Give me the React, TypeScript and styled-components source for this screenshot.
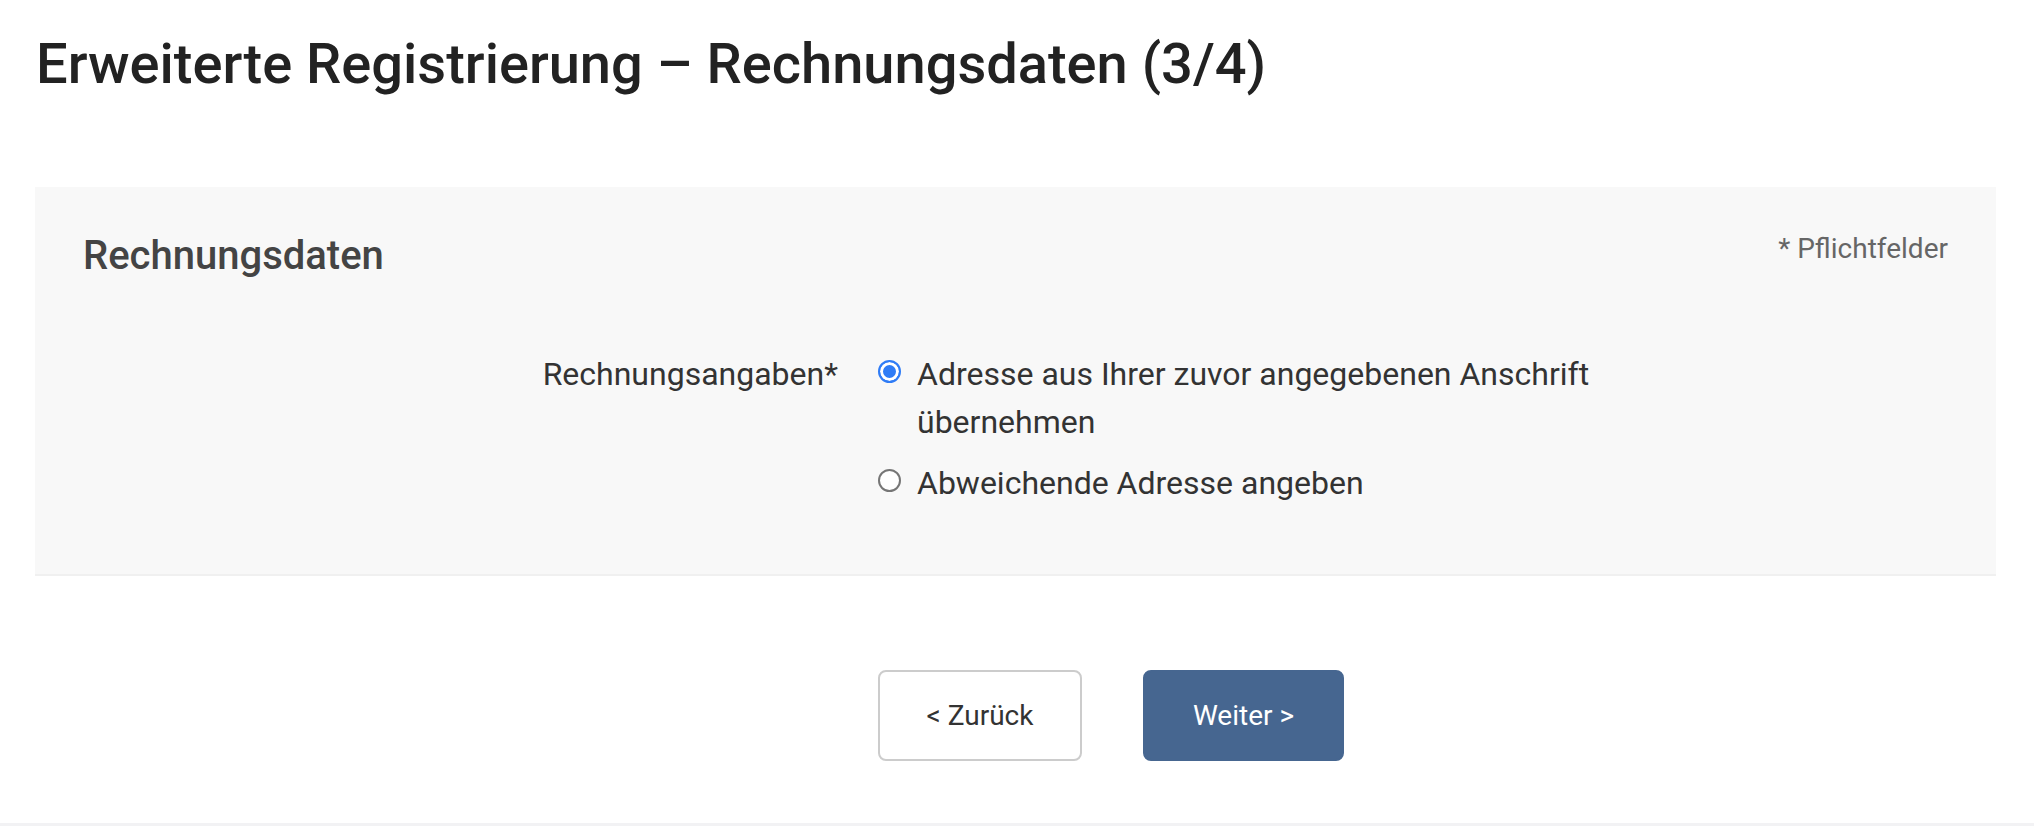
import React from "react";
import styled, { createGlobalStyle } from "styled-components";

const GlobalStyle = createGlobalStyle`
  body {
    margin: 0;
    background: #ffffff;
    font-family: Roboto, "Noto Sans", "Liberation Sans", sans-serif;
    color: #333333;
  }
`;

const options = [
  { id: "same", text: "Adresse aus Ihrer zuvor angegebenen Anschrift übernehmen", checked: true },
  { id: "other", text: "Abweichende Adresse angeben", checked: false },
];

export default function App() {
  return (
    <>
      <GlobalStyle />
      <Main>
        <Title>Erweiterte Registrierung – Rechnungsdaten (3/4)</Title>
        <Panel>
          <PanelHeader>
            <PanelTitle>Rechnungsdaten</PanelTitle>
            <Required>* Pflichtfelder</Required>
          </PanelHeader>
          <FormGrid>
            <FieldLabel>Rechnungsangaben*</FieldLabel>
            <RadioList>
              {options.map((o) => (
                <RadioOption key={o.id}>
                  <Radio type="radio" name="billing" defaultChecked={o.checked} />
                  <span>{o.text}</span>
                </RadioOption>
              ))}
            </RadioList>
          </FormGrid>
        </Panel>
        <Actions>
          <span />
          <ButtonRow>
            <Button>&lt; Zurück</Button>
            <Button $primary>Weiter &gt;</Button>
          </ButtonRow>
        </Actions>
      </Main>
      <Footer />
    </>
  );
}

// Styled Components

const Main = styled.main`
  padding: 0 38px 0 35px;
`;

const Title = styled.h1`
  margin: 31px 0 0 1px;
  font-size: 56px;
  font-weight: 500;
  line-height: 1.2;
  color: #222222;
`;

const Panel = styled.section`
  margin-top: 89px;
  background: #f8f8f8;
  padding: 45px 48px 67px;
  box-shadow: 0 2px 0 #f0f0f0;
`;

const PanelHeader = styled.div`
  display: flex;
  justify-content: space-between;
  align-items: flex-start;
`;

const PanelTitle = styled.h2`
  margin: 0;
  font-size: 40px;
  font-weight: 500;
  line-height: 48px;
  color: #444444;
`;

const Required = styled.span`
  font-size: 28px;
  line-height: 34px;
  color: #666666;
`;

const FormGrid = styled.div`
  display: grid;
  grid-template-columns: 755px 740px;
  column-gap: 40px;
  margin-top: 70px;
`;

const FieldLabel = styled.div`
  text-align: right;
  font-size: 32px;
  line-height: 48px;
  color: #333333;
`;

const RadioList = styled.div`
  display: flex;
  flex-direction: column;
  gap: 13px;
`;

const RadioOption = styled.label`
  display: flex;
  align-items: flex-start;
  gap: 16px;
  font-size: 32px;
  line-height: 48px;
  color: #333333;
`;

const Radio = styled.input`
  appearance: none;
  flex: none;
  box-sizing: border-box;
  width: 23px;
  height: 23px;
  margin: 10px 0 0;
  border: 2px solid #767676;
  border-radius: 50%;
  background: #ffffff;

  &:checked {
    border-color: #2f7cf6;
    background: #2f7cf6;
    box-shadow: inset 0 0 0 3px #ffffff;
  }
`;

const Actions = styled.div`
  display: grid;
  grid-template-columns: 755px 740px;
  column-gap: 40px;
  padding-left: 48px;
  margin-top: 96px;
`;

const ButtonRow = styled.div`
  display: flex;
  gap: 61px;
`;

const Button = styled.button<{ $primary?: boolean }>`
  width: ${(p) => (p.$primary ? "201px" : "204px")};
  height: 91px;
  border: 2px solid ${(p) => (p.$primary ? "#466690" : "#cccccc")};
  border-radius: 8px;
  background: ${(p) => (p.$primary ? "#466690" : "#ffffff")};
  color: ${(p) => (p.$primary ? "#ffffff" : "#333333")};
  font-family: Roboto, "Liberation Sans", sans-serif;
  font-size: 28px;
  cursor: pointer;
`;

const Footer = styled.footer`
  margin-top: 62px;
  height: 3px;
  background: #f2f2f4;
`;
